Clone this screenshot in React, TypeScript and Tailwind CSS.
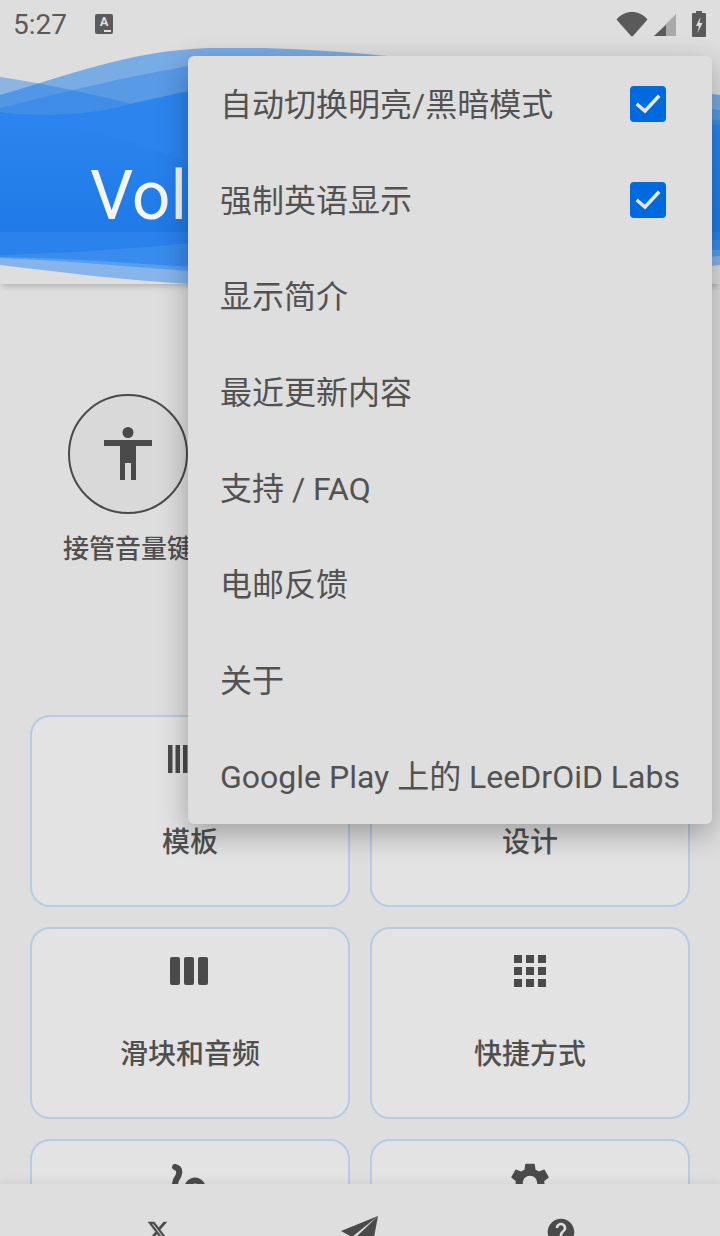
import type { ReactNode } from 'react';

const menuItems = [
  { label: '自动切换明亮/黑暗模式', checked: true },
  { label: '强制英语显示', checked: true },
  { label: '显示简介' },
  { label: '最近更新内容' },
  { label: '支持 / FAQ' },
  { label: '电邮反馈' },
  { label: '关于' },
  { label: 'Google Play 上的 LeeDrOiD Labs' },
];

const gearPath =
  'M19.14 12.94c.04-.3.06-.61.06-.94 0-.32-.02-.64-.07-.94l2.03-1.58c.18-.14.23-.41.12-.61l-1.92-3.32c-.12-.22-.37-.29-.59-.22l-2.39.96c-.5-.38-1.03-.7-1.62-.94l-.36-2.54c-.04-.24-.24-.41-.48-.41h-3.84c-.24 0-.43.17-.47.41l-.36 2.54c-.59.24-1.13.57-1.62.94l-2.39-.96c-.22-.08-.47 0-.59.22L2.74 8.87c-.12.21-.08.47.12.61l2.03 1.58c-.05.3-.09.63-.09.94s.02.64.07.94l-2.03 1.58c-.18.14-.23.41-.12.61l1.92 3.32c.12.22.37.29.59.22l2.39-.96c.5.38 1.03.7 1.62.94l.36 2.54c.05.24.24.41.48.41h3.84c.24 0 .44-.17.47-.41l.36-2.54c.59-.24 1.13-.56 1.62-.94l2.39.96c.22.08.47 0 .59-.22l1.92-3.32c.12-.22.07-.47-.12-.61l-2.01-1.58zM12 15.6c-1.98 0-3.6-1.62-3.6-3.6s1.62-3.6 3.6-3.6 3.6 1.62 3.6 3.6-1.62 3.6-3.6 3.6z';

function StatusIcons() {
  return (
    <div className="flex items-center">
      <svg width="32" height="26" viewBox="0 0 32 26" className="mr-[5px] mt-[-1px]">
        <path d="M0.5 8.5C4.5 3.5 10 1 16 1s11.5 2.5 15.5 7.5L17 25c-.6.6-1.4.6-2 0z" fill="#5a5a5a" />
      </svg>
      <svg width="24" height="24" viewBox="0 0 24 24" className="mr-[15px] mt-[1px]">
        <path d="M23 1v22H1z" fill="#a9a9a9" />
        <path d="M13 12v11H1z" fill="#5a5a5a" />
      </svg>
      <svg width="14" height="26" viewBox="0 0 14 26" className="mr-[14px]">
        <path d="M4 0h6v2h3a1 1 0 0 1 1 1v22a1 1 0 0 1-1 1H1a1 1 0 0 1-1-1V3a1 1 0 0 1 1-1h3z" fill="#5a5a5a" />
        <path d="M8.5 6 4 15h3l-1.500 7L10.500 12H7.500z" fill="#e0e0e0" />
      </svg>
    </div>
  );
}

function Waves() {
  return (
    <svg viewBox="0 48 720 236" className="absolute inset-0 h-full w-full" preserveAspectRatio="none">
      <defs>
        <linearGradient id="base" x1="0" y1="0" x2="0" y2="1">
          <stop offset="0" stopColor="#2d86ef" />
          <stop offset="1" stopColor="#1f7ae7" />
        </linearGradient>
      </defs>
      {/* top ribbons */}
      <path d="M0 95C60 78 130 50 210 48C330 44 520 70 720 95V240H0Z" fill="#1c7ce9" fillOpacity="0.52" />
      <path d="M0 77C60 86 120 100 190 119C300 145 500 110 720 120V240H0Z" fill="#1c7ce9" fillOpacity="0.42" />
      <path d="M0 108C60 93 120 78 188 66C320 50 540 90 720 110V240H0Z" fill="#1c7ce9" fillOpacity="0.35" />
      <path d="M0 113C40 116 90 116 130 104C150 99 170 95 190 91C340 90 560 110 720 125V240H0Z" fill="#2c85ef" />
      <path d="M0 112C70 122 130 140 190 162C360 170 560 140 720 130V232H0Z" fill="url(#base)" />
      {/* bottom ribbons */}
      <path d="M0 232H720V265C540 288 360 288 190 284C120 280 60 272 0 265Z" fill="#86b4eb" />
      <path d="M0 232H720V256C540 268 360 278 190 271C120 266 60 260 0 258Z" fill="#569ef0" />
      <path d="M0 232H720V250C540 256 360 268 190 267C120 262 60 258 0 257Z" fill="#398cee" />
      <path d="M0 232H720V240C540 236 360 236 190 243C120 250 60 253 0 255Z" fill="#2a82ed" />
    </svg>
  );
}

function Card({ label, icon }: { label: string; icon: ReactNode }) {
  return (
    <div className="flex h-[192px] flex-col items-center rounded-[20px] border-2 border-[#b5cbe6] bg-[#e3e3e3] pt-[18px]">
      <div className="h-[48px] w-[48px] text-[#4a4a4a]">{icon}</div>
      <div className="mt-[42px] text-[28px] font-medium leading-[36px] text-[#4f4f4f]">{label}</div>
    </div>
  );
}

function Check() {
  return (
    <span className="flex h-[36px] w-[36px] items-center justify-center rounded-[4px] bg-[#0069e0]">
      <svg width="30" height="30" viewBox="0 0 30 30" fill="none" stroke="#e6e6e6" strokeWidth="3.500" strokeLinecap="square">
        <path d="M5 16l7 6L25 8" />
      </svg>
    </span>
  );
}

export default function App() {
  return (
    <div className="relative flex h-[1236px] w-[720px] flex-col overflow-hidden bg-[#dedede] font-['Roboto','Noto_Sans_CJK_SC',sans-serif]">
      <div className="flex h-[48px] shrink-0 items-center justify-between pl-[13px]">
        <div className="flex items-center">
          <span className="mt-[2px] text-[28px] leading-none text-[#5a5a5a]">5:27</span>
          <span className="relative ml-[28px] flex h-[20px] w-[18px] justify-center rounded-[2px] bg-[#5a5a5a] text-[13px] font-bold leading-[16px] text-[#e0e0e0]">
            A
            <span className="absolute bottom-[2px] right-[2px] h-[2px] w-[7px] bg-[#e0e0e0]" />
          </span>
        </div>
        <StatusIcons />
      </div>

      <header className="relative z-10 h-[236px] shrink-0 bg-[#dedede] shadow-[0_4px_6px_-2px_rgba(0,0,0,0.22)]">
        <Waves />
        <div className="relative pl-[90px] pt-[108px] text-[68px] leading-[80px] whitespace-nowrap text-[#f5f5f5]">Volume Styles</div>
      </header>

      <main className="min-h-0 flex-1 overflow-hidden px-[30px] pt-[110px]">
        <div className="ml-[33px] flex w-[130px] flex-col items-center">
          <div className="flex h-[120px] w-[120px] items-center justify-center rounded-full border-2 border-[#4a4a4a] bg-[#d9d9d9]">
            <svg width="48" height="54" viewBox="0 0 48 54" fill="#4a4a4a">
              <circle cx="24" cy="5.500" r="5.500" />
              <path d="M0 13h48v6H32v34h-5V36h-6v17h-5V19H0z" />
            </svg>
          </div>
          <div className="mt-[17px] whitespace-nowrap text-[26px] font-medium leading-[36px] text-[#4f4f4f]">接管音量键</div>
        </div>

        <div className="mt-[148px] grid grid-cols-2 gap-[20px]">
          <Card
            label="模板"
            icon={
              <svg viewBox="0 0 48 48" fill="currentColor">
                <rect x="2" y="10" width="4.500" height="28" />
                <rect x="9.500" y="10" width="4.500" height="28" />
                <rect x="17" y="10" width="4.500" height="28" />
                <rect x="24.500" y="10" width="4.500" height="28" />
              </svg>
            }
          />
          <Card label="设计" icon={<span />} />
          <Card
            label="滑块和音频"
            icon={
              <svg viewBox="0 0 48 48" fill="currentColor">
                <rect x="4" y="10" width="10" height="28" rx="2" />
                <rect x="18" y="10" width="10" height="28" rx="2" />
                <rect x="32" y="10" width="10" height="28" rx="2" />
              </svg>
            }
          />
          <Card
            label="快捷方式"
            icon={
              <svg viewBox="0 0 48 48" fill="currentColor">
                {[8, 20, 32].map((y) => [8, 20, 32].map((x) => <rect key={`${x}-${y}`} x={x} y={y} width="8" height="8" />))}
              </svg>
            }
          />
          <Card
            label="手势"
            icon={
              <svg viewBox="0 0 48 48" fill="none" stroke="currentColor" strokeWidth="6" strokeLinecap="round">
                <path d="M9 8c7 2 4 9 1 13l-2 8M20 32c2-14 16-14 18 0" />
              </svg>
            }
          />
          <Card
            label="设置"
            icon={
              <svg viewBox="0 0 24 24" fill="currentColor">
                <path d={gearPath} />
              </svg>
            }
          />
        </div>
      </main>

      <footer className="relative z-10 grid h-[52px] shrink-0 grid-cols-[341px_208px_1fr] overflow-hidden bg-[#dedede] shadow-[0_-4px_8px_rgba(0,0,0,0.05)]">
        <svg width="22" height="22" viewBox="0 0 24 24" fill="#4a4a4a" stroke="#4a4a4a" strokeWidth="0.6" className="ml-[147px] mt-[36px]">
          <path d="M18.244 2.250h3.308l-7.227 8.260 8.502 11.240H16.170l-5.214-6.817L4.990 21.750H1.680l7.730-8.835L1.254 2.250H8.080l4.713 6.231zm-1.161 17.520h1.833L7.084 4.126H5.117z" />
        </svg>
        <svg width="40" height="36" viewBox="0 0 40 36" fill="#4a4a4a" className="mt-[32px]">
          <path d="M37 0L0 15l11 6 2 12 6-7 12 6z" />
          <path d="M37 0L11 21l1 3z" fill="#dedede" />
        </svg>
        <svg width="32" height="32" viewBox="0 0 24 24" fill="#4a4a4a" className="ml-[-4px] mt-[32px]">
          <path d="M12 2C6.480 2 2 6.480 2 12s4.480 10 10 10 10-4.480 10-10S17.520 2 12 2zm1 17h-2v-2h2v2zm2.070-7.750l-.9.920C13.450 12.900 13 13.500 13 15h-2v-.5c0-1.100.45-2.100 1.170-2.830l1.240-1.260c.37-.36.59-.86.59-1.410 0-1.100-.9-2-2-2s-2 .9-2 2H8c0-2.210 1.790-4 4-4s4 1.790 4 4c0 .88-.36 1.680-.93 2.250z" />
        </svg>
      </footer>

      <div className="absolute left-[188px] top-[56px] z-20 w-[524px] rounded-[6px] bg-[#dedede] shadow-[0_10px_30px_rgba(0,0,0,0.3)]">
        {menuItems.map((item) => (
          <div key={item.label} className="flex h-[96px] items-center justify-between pl-[32px] pr-[46px] text-[32px] whitespace-nowrap text-[#525252]">
            <span className="mt-[2px]">{item.label}</span>
            {item.checked && <Check />}
          </div>
        ))}
      </div>
    </div>
  );
}
